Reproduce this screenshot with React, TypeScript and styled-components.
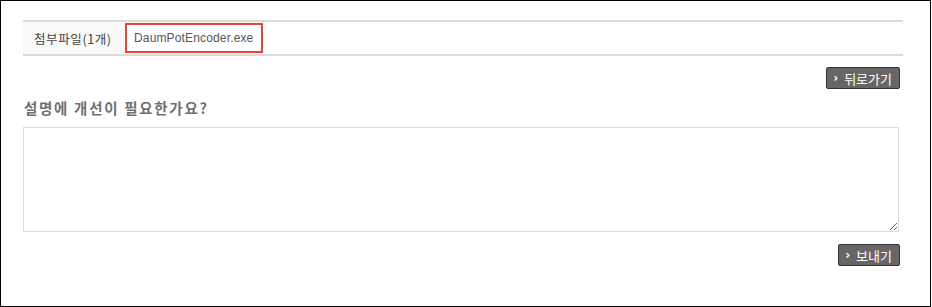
import React from 'react';
import styled, { createGlobalStyle } from 'styled-components';

const GlobalStyle = createGlobalStyle`
  html, body {
    margin: 0;
    padding: 0;
    background: #fff;
  }
  body {
    font-family: "Liberation Sans", "Noto Sans CJK KR", sans-serif;
  }
`;

const Frame = styled.div`
  box-sizing: border-box;
  width: 931px;
  height: 307px;
  border: 1px solid #000;
  padding: 19px 0 0 22px;
`;

const Content = styled.div`
  width: 877px;
`;

const FileTable = styled.div`
  display: flex;
  width: 880px;
  height: 32px;
  border-top: 2px solid #dcdcdc;
  border-bottom: 2px solid #dcdcdc;
`;

const HeadCell = styled.div`
  display: flex;
  align-items: center;
  width: 102px;
  padding-left: 11px;
  box-sizing: border-box;
  background: #f9f9f9;
  font-family: "Noto Sans CJK KR", sans-serif;
  font-size: 12.5px;
  letter-spacing: 0.6px;
  color: #444;
`;

const BodyCell = styled.div`
  flex: 1;
  display: flex;
  align-items: center;
`;

const FileName = styled.span`
  box-sizing: border-box;
  display: flex;
  align-items: center;
  height: 30px;
  width: 138px;
  padding-left: 7px;
  border: 2px solid #e5443f;
  font-size: 12px;
  letter-spacing: 0.15px;
  color: #555;
`;

const ButtonRow = styled.div<{ $top: number }>`
  display: flex;
  justify-content: flex-end;
  margin-top: ${p => p.$top}px;
`;

const DarkButton = styled.button`
  box-sizing: border-box;
  display: flex;
  align-items: center;
  gap: 6px;
  height: 22px;
  padding: 0 7px 0 6px;
  background: #666;
  border: 1px solid #333;
  border-radius: 2px;
  color: #fff;
  font-family: "Noto Sans CJK KR", "Liberation Sans", sans-serif;
  font-size: 13px;
  line-height: 1;
  cursor: pointer;
`;

const Chevron = styled.span`
  font-family: "DejaVu Sans", sans-serif;
  font-size: 12px;
  font-weight: bold;
`;

const Heading = styled.h3`
  margin: 9px 0 0 1px;
  font-family: "Noto Sans CJK KR", sans-serif;
  font-size: 14.5px;
  font-weight: bold;
  letter-spacing: 1.7px;
  color: #707070;
  line-height: 20px;
`;

const Feedback = styled.textarea`
  display: block;
  box-sizing: border-box;
  width: 876px;
  height: 105px;
  margin-top: 9px;
  border: 1px solid #dcdcdc;
  resize: vertical;
  font-family: "Liberation Sans", "Noto Sans CJK KR", sans-serif;
  font-size: 12px;
`;

export default function App() {
  return (
    <>
      <GlobalStyle />
      <Frame>
        <Content>
          <FileTable>
            <HeadCell>첨부파일(1개)</HeadCell>
            <BodyCell>
              <FileName>DaumPotEncoder.exe</FileName>
            </BodyCell>
          </FileTable>
          <ButtonRow $top={11}>
            <DarkButton>
              <Chevron>›</Chevron>뒤로가기
            </DarkButton>
          </ButtonRow>
          <Heading>설명에 개선이 필요한가요?</Heading>
          <Feedback />
          <ButtonRow $top={12}>
            <DarkButton>
              <Chevron>›</Chevron>보내기
            </DarkButton>
          </ButtonRow>
        </Content>
      </Frame>
    </>
  );
}
